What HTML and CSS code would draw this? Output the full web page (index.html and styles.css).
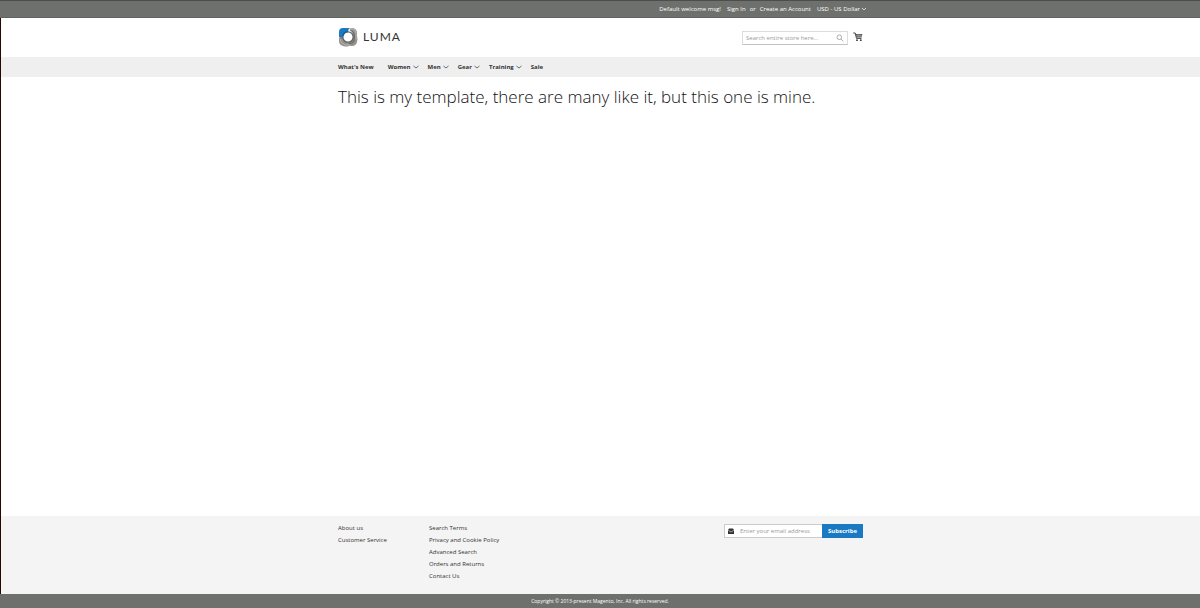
FILE: index.html
```html
<!DOCTYPE html>
<html lang="en">
<head>
<meta charset="utf-8">
<title>Luma</title>
<meta name="viewport" content="width=device-width, initial-scale=1">
<link rel="stylesheet" href="styles.css">
</head>
<body>
<div class="page">
  <div class="panel">
    <div class="panel-inner">
      <span class="welcome">Default welcome msg!</span>
      <a href="#">Sign In</a>
      <span class="or">or</span>
      <a class="create" href="#">Create an Account</a>
      <button class="currency" type="button">USD - US Dollar
        <svg class="caret" viewBox="0 0 6 4"><path d="M1 1l2 2 2-2"/></svg>
      </button>
    </div>
  </div>
  <header class="header wrap">
    <a class="logo" href="#" aria-label="Luma">
      <svg class="logo-mark" viewBox="0 0 20 20">
        <path d="M8 1h7q4 1 4 5v3q1 3 0 6-1 4-5 4h-3q-3 1-6 0-4-1-4-5v-3l2-2 6 4 6-5-1-5z" fill="#92918e"/>
        <path d="M5 1h6l-1 4-4 2-1 4-4-1V5q0-4 4-4z" fill="#1979c3"/>
        <path d="M11 1.500h3q4 1 4 5v6M2 12q1 5 5 6h6" fill="none" stroke="#b5b4b0"/>
        <path d="M12 3q5 2 4.500 8T11 16.500" fill="none" stroke="#6d6b69" stroke-width="1.200"/>
        <circle cx="10" cy="10" r="5.200" fill="#fff" stroke="#62605d" stroke-width="1.300"/>
        <path d="M4.800 9q1-4 5-4.300" fill="none" stroke="#155f9e" stroke-width="1.300"/>
      </svg>
      <span class="logo-text">LUMA</span>
    </a>
    <form class="search">
      <input type="search" aria-label="Search" placeholder="Search entire store here...">
      <button type="button" aria-label="Search">
        <svg viewBox="0 0 8 8"><circle cx="3.3" cy="3.3" r="2.3"/><path d="M5 5l2.3 2.3"/></svg>
      </button>
    </form>
    <a class="cart" href="#" aria-label="My Cart">
      <svg viewBox="0 0 10 10">
        <path d="M.3 1h1.9l1.300 5.400h5" fill="none" stroke="#444" stroke-width="1"/>
        <path d="M2.500 2h6.900l-.9 3.500H3.300z" fill="#555"/>
        <path d="M3 3.800h6M5 2v3.500M7 2v3.500" stroke="#ddd" stroke-width=".4"/>
        <circle cx="4" cy="8.200" r=".9" fill="#333"/><circle cx="7.800" cy="8.200" r=".9" fill="#333"/>
      </svg>
    </a>
  </header>
  <nav class="nav">
    <div class="nav-inner wrap">
      <a href="#">What's New</a>
      <a href="#">Women <svg class="caret" viewBox="0 0 6 4"><path d="M.5 1l2.500 2 2.500-2"/></svg></a>
      <a href="#">Men <svg class="caret" viewBox="0 0 6 4"><path d="M.5 1l2.500 2 2.500-2"/></svg></a>
      <a href="#">Gear <svg class="caret" viewBox="0 0 6 4"><path d="M.5 1l2.500 2 2.500-2"/></svg></a>
      <a href="#">Training <svg class="caret" viewBox="0 0 6 4"><path d="M.5 1l2.500 2 2.500-2"/></svg></a>
      <a href="#">Sale</a>
    </div>
  </nav>
  <main class="main wrap">
    <h1>This is my template, there are many like it, but this one is mine.</h1>
  </main>
  <footer class="footer">
    <div class="footer-inner wrap">
      <ul class="links">
        <li><a href="#">About us</a></li>
        <li><a href="#">Customer Service</a></li>
      </ul>
      <ul class="links">
        <li><a href="#">Search Terms</a></li>
        <li><a href="#">Privacy and Cookie Policy</a></li>
        <li><a href="#">Advanced Search</a></li>
        <li><a href="#">Orders and Returns</a></li>
        <li><a href="#">Contact Us</a></li>
      </ul>
      <form class="newsletter">
        <div class="field">
          <svg viewBox="0 0 8 8"><path d="M1 3l1-1.500h4L7 3v4H1z" fill="#333"/><path d="M1.200 3.200L4 5l2.800-1.800" fill="none" stroke="#ddd" stroke-width=".7"/></svg>
          <input type="email" aria-label="Email address" placeholder="Enter your email address">
        </div>
        <button type="button">Subscribe</button>
      </form>
    </div>
  </footer>
  <small class="copyright">Copyright © 2013-present Magento, Inc. All rights reserved.</small>
</div>
</body>
</html>
```
FILE: styles.css
```css
* {
  box-sizing: border-box;
}

body {
  margin: 0;
  background: #fff;
  color: #333;
  font: 400 6px/12px "Open Sans", "Noto Sans", sans-serif;
}

a {
  color: inherit;
  text-decoration: none;
}

input,
button {
  min-width: 0;
  margin: 0;
  padding: 0;
  border: 0;
  border-radius: 0;
  background: none;
  color: inherit;
  font: inherit;
  outline: 0;
}

svg {
  display: block;
  flex: none;
}

.page {
  display: flex;
  flex-direction: column;
  min-height: 100vh;
  border-left: 1px solid #2a0505;
}

.wrap {
  width: 100%;
  max-width: 525px;
  margin: 0 auto;
}

.caret {
  width: 6px;
  height: 4px;
  fill: none;
  stroke: currentColor;
  stroke-width: 0.7;
}

.panel {
  margin-left: -1px;
  padding: 2px 0;
  border-top: 1px solid #504c49;
  border-bottom: 1px solid #5f625f;
  background: #6e706e;
  color: #fff;
}

.panel-inner {
  display: flex;
  justify-content: flex-end;
  align-items: center;
  width: 100%;
  max-width: 534px;
  margin: 0 auto;
}

.welcome,
.create {
  margin-right: 6px;
}

.or {
  margin: 0 4px;
}

.currency {
  display: flex;
  align-items: center;
  gap: 1px;
}

.header {
  display: flex;
  align-items: center;
  padding: 9px 0 10px;
}

.logo {
  display: flex;
  align-items: center;
  gap: 5px;
  margin-right: auto;
}

.logo-mark {
  width: 20px;
  height: 20px;
}

.logo-text {
  font: 400 12px/20px Lato, sans-serif;
  letter-spacing: 1px;
}

.search {
  display: flex;
  align-items: center;
  width: 106px;
  height: 14px;
  margin: 1px 5px 0 0;
  padding: 0 3px;
  border: 1px solid #ddd;
  border-bottom-color: #c2c2c2;
}

.search input {
  flex: 1;
  height: 12px;
}

.search svg {
  width: 8px;
  height: 8px;
  fill: none;
  stroke: #999;
  stroke-width: 0.8;
}

::placeholder {
  color: #999;
  opacity: 1;
}

.cart svg {
  width: 10px;
  height: 10px;
}

.nav {
  padding: 4px 0;
  background: #efefef;
}

.nav-inner {
  display: flex;
  gap: 9px;
  font-weight: 700;
}

.nav-inner a {
  display: flex;
  align-items: center;
  gap: 2px;
}

.nav-inner a:first-child {
  margin-right: 5px;
}

.main {
  flex: 1;
  padding-top: 8px;
}

h1 {
  margin: 0;
  color: #111;
  font-size: 17px;
  font-weight: 300;
  line-height: 24px;
}

.footer {
  padding: 6px 0 12px;
  background: #f4f4f4;
}

.footer-inner {
  display: flex;
  align-items: flex-start;
}

.links {
  min-width: 91px;
  margin: 0;
  padding: 0;
  list-style: none;
}

.newsletter {
  display: flex;
  width: 139px;
  margin: 2px 0 0 auto;
}

.field {
  display: flex;
  flex: 1;
  align-items: center;
  gap: 5px;
  min-width: 0;
  padding-left: 2px;
  border: 1px solid #ccc;
  border-right: 0;
  background: #fff;
}

.field svg {
  width: 8px;
  height: 8px;
}

.field input {
  flex: 1;
  height: 12px;
}

.newsletter button {
  width: 41px;
  background: #1979c3;
  color: #fff;
  font-weight: 700;
}

.copyright {
  display: block;
  margin-left: -1px;
  padding: 1px 0;
  background: #6e706e;
  color: #fff;
  font-size: 5px;
  text-align: center;
}
```
